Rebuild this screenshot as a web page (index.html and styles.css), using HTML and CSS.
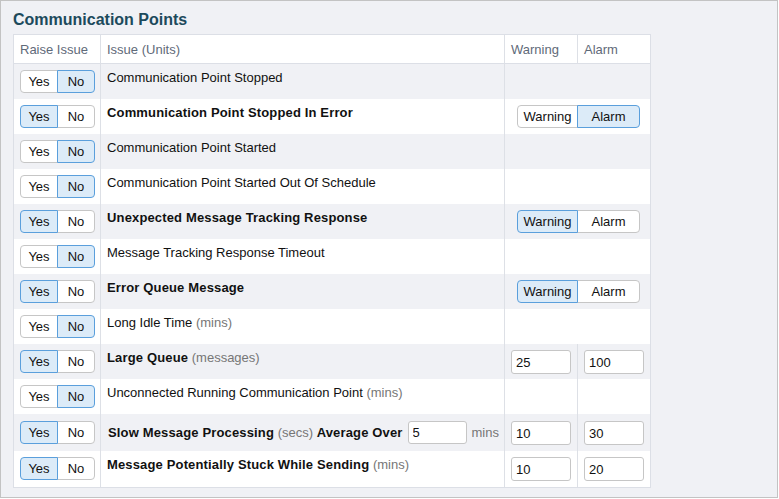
FILE: index.html
```html
<!DOCTYPE html>
<html>
<head>
<meta charset="utf-8">
<link rel="stylesheet" href="styles.css">
</head>
<body>
<div class="frame">
  <h1 class="title">Communication Points</h1>
  <table class="grid">
    <colgroup>
      <col class="c-raise"><col class="c-issue"><col class="c-warn"><col class="c-alarm">
    </colgroup>
    <thead>
      <tr><th>Raise Issue</th><th class="bl">Issue (Units)</th><th class="bl">Warning</th><th class="bl">Alarm</th></tr>
    </thead>
    <tbody>
      <tr class="odd">
        <td><div class="tg"><span class="b yes">Yes</span><span class="b no on">No</span></div></td>
        <td class="bl txt">Communication Point Stopped</td>
        <td class="bl" colspan="2"></td>
      </tr>
      <tr>
        <td><div class="tg"><span class="b yes on">Yes</span><span class="b no">No</span></div></td>
        <td class="bl txt"><b>Communication Point Stopped In Error</b></td>
        <td class="bl wa" colspan="2"><div class="tg"><span class="b warn">Warning</span><span class="b alarm on">Alarm</span></div></td>
      </tr>
      <tr class="odd">
        <td><div class="tg"><span class="b yes">Yes</span><span class="b no on">No</span></div></td>
        <td class="bl txt">Communication Point Started</td>
        <td class="bl" colspan="2"></td>
      </tr>
      <tr>
        <td><div class="tg"><span class="b yes">Yes</span><span class="b no on">No</span></div></td>
        <td class="bl txt">Communication Point Started Out Of Schedule</td>
        <td class="bl" colspan="2"></td>
      </tr>
      <tr class="odd">
        <td><div class="tg"><span class="b yes on">Yes</span><span class="b no">No</span></div></td>
        <td class="bl txt"><b>Unexpected Message Tracking Response</b></td>
        <td class="bl wa" colspan="2"><div class="tg"><span class="b warn on">Warning</span><span class="b alarm">Alarm</span></div></td>
      </tr>
      <tr>
        <td><div class="tg"><span class="b yes">Yes</span><span class="b no on">No</span></div></td>
        <td class="bl txt">Message Tracking Response Timeout</td>
        <td class="bl" colspan="2"></td>
      </tr>
      <tr class="odd">
        <td><div class="tg"><span class="b yes on">Yes</span><span class="b no">No</span></div></td>
        <td class="bl txt"><b>Error Queue Message</b></td>
        <td class="bl wa" colspan="2"><div class="tg"><span class="b warn on">Warning</span><span class="b alarm">Alarm</span></div></td>
      </tr>
      <tr>
        <td><div class="tg"><span class="b yes">Yes</span><span class="b no on">No</span></div></td>
        <td class="bl txt">Long Idle Time <span class="unit">(mins)</span></td>
        <td class="bl" colspan="2"></td>
      </tr>
      <tr class="odd">
        <td><div class="tg"><span class="b yes on">Yes</span><span class="b no">No</span></div></td>
        <td class="bl txt"><b>Large Queue</b> <span class="unit">(messages)</span></td>
        <td class="bl"><input class="num" type="text" value="25"></td>
        <td class="bl"><input class="num" type="text" value="100"></td>
      </tr>
      <tr>
        <td><div class="tg"><span class="b yes">Yes</span><span class="b no on">No</span></div></td>
        <td class="bl txt">Unconnected Running Communication Point <span class="unit">(mins)</span></td>
        <td class="bl"></td>
        <td class="bl"></td>
      </tr>
      <tr class="odd tall">
        <td><div class="tg"><span class="b yes on">Yes</span><span class="b no">No</span></div></td>
        <td class="bl txt"><div class="inl"><span class="lbl"><b>Slow Message Processing</b> <span class="unit">(secs)</span> <b>Average Over</b></span><input class="avg" type="text" value="5"><span class="unit">mins</span></div></td>
        <td class="bl"><input class="num" type="text" value="10"></td>
        <td class="bl"><input class="num" type="text" value="30"></td>
      </tr>
      <tr class="tall2">
        <td><div class="tg"><span class="b yes on">Yes</span><span class="b no">No</span></div></td>
        <td class="bl txt"><b>Message Potentially Stuck While Sending</b> <span class="unit">(mins)</span></td>
        <td class="bl"><input class="num" type="text" value="10"></td>
        <td class="bl"><input class="num" type="text" value="20"></td>
      </tr>
    </tbody>
  </table>
</div>
</body>
</html>
```

FILE: styles.css
```css
html, body {
  margin: 0;
  padding: 0;
  background: #ffffff;
}
body {
  font-family: "Liberation Sans", Arial, sans-serif;
  font-size: 13px;
  color: #111;
}
.frame {
  box-sizing: border-box;
  width: 778px;
  height: 498px;
  border: 1px solid #c3c3c3;
  background: #f0f1f5;
  padding: 10px 12px 0 12px;
}
.title {
  margin: 0 0 5px 0;
  font-size: 16px;
  line-height: 18px;
  font-weight: bold;
  color: #1c4a5c;
}
.grid {
  table-layout: fixed;
  border-collapse: separate;
  border-spacing: 0;
  width: 638px;
  border: 1px solid #dcdfe6;
  background: #ffffff;
}
.c-raise { width: 86px; }
.c-issue { width: 404px; }
.c-warn { width: 73px; }
.c-alarm { width: 73px; }
.grid th {
  height: 28px;
  padding: 0 6px;
  text-align: left;
  font-weight: normal;
  color: #5f6a79;
  border-bottom: 1px solid #dcdfe6;
  vertical-align: middle;
}
.grid td {
  height: 35px;
  box-sizing: border-box;
  padding: 6px 6px 0 6px;
  vertical-align: top;
  line-height: 16px;
  white-space: nowrap;
}
.grid td b { letter-spacing: 0.15px; }
.grid .bl { border-left: 1px solid #dde0e6; }
.grid tr.odd td { background: #f0f1f5; }
.grid tr.tall td { height: 37px; padding-top: 7px; }
.grid tr.tall2 td { height: 36px; }
.unit { color: #767676; }
.tg {
  display: inline-flex;
  vertical-align: top;
}
.wa { padding-left: 12px !important; }
.b {
  box-sizing: border-box;
  display: inline-flex;
  align-items: center;
  justify-content: center;
  height: 23px;
  border: 1px solid #c6c6c6;
  background: #ffffff;
  color: #111;
  position: relative;
}
.b + .b { margin-left: -1px; }
.b:first-child { border-radius: 4px 0 0 4px; }
.b:last-child { border-radius: 0 4px 4px 0; }
.b.on {
  background: #dcebf8;
  border-color: #5a9fdc;
  z-index: 1;
}
.yes, .no { width: 38px; }
.warn { width: 61px; }
.alarm { width: 63px; }
.num, .avg {
  box-sizing: border-box;
  height: 24px;
  border: 1px solid #c6c6c6;
  border-radius: 3px;
  padding: 0 4px;
  font-family: "Liberation Sans", Arial, sans-serif;
  font-size: 13px;
  color: #111;
  background: #fff;
  margin: 0;
}
.num { width: 60px; }
.avg { width: 59px; height: 23px; margin: 0 5px 0 5px; flex-shrink: 0; }
.inl {
  display: flex;
  align-items: center;
  padding-left: 1px;
}
.lbl { white-space: nowrap; flex-shrink: 0; }
```
